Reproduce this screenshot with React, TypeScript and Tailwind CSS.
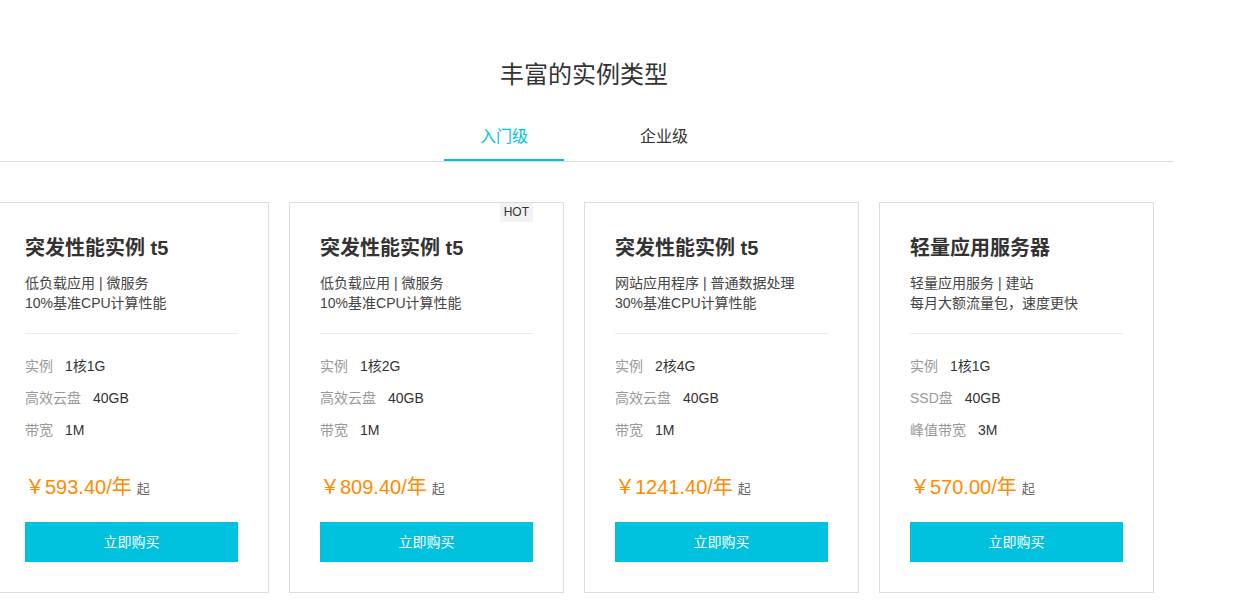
import React from 'react';

interface Plan {
  name: string;
  desc: string[];
  specs: [string, string][];
  price: string;
  hot?: boolean;
}

const plans: Plan[] = [
  {
    name: '突发性能实例 t5',
    desc: ['低负载应用 | 微服务', '10%基准CPU计算性能'],
    specs: [['实例', '1核1G'], ['高效云盘', '40GB'], ['带宽', '1M']],
    price: '593.40',
  },
  {
    name: '突发性能实例 t5',
    desc: ['低负载应用 | 微服务', '10%基准CPU计算性能'],
    specs: [['实例', '1核2G'], ['高效云盘', '40GB'], ['带宽', '1M']],
    price: '809.40',
    hot: true,
  },
  {
    name: '突发性能实例 t5',
    desc: ['网站应用程序 | 普通数据处理', '30%基准CPU计算性能'],
    specs: [['实例', '2核4G'], ['高效云盘', '40GB'], ['带宽', '1M']],
    price: '1241.40',
  },
  {
    name: '轻量应用服务器',
    desc: ['轻量应用服务 | 建站', '每月大额流量包，速度更快'],
    specs: [['实例', '1核1G'], ['SSD盘', '40GB'], ['峰值带宽', '3M']],
    price: '570.00',
  },
];

const PlanCard: React.FC<{ plan: Plan }> = ({ plan }) => (
  <div className="relative w-[275px] shrink-0 border border-[#dcdcdc] bg-white p-[30px]">
    {plan.hot && (
      <span className="absolute top-0 right-[30px] bg-[#f2f2f2] px-[4px] text-[12px] leading-[19px] text-[#333]">
        HOT
      </span>
    )}
    <h3 className="text-[20px] font-bold leading-[30px] text-[#333]">{plan.name}</h3>
    <div className="mt-[10px] text-[14px] leading-[20px] text-[#444]">
      {plan.desc.map((d, i) => (
        <p key={i}>{d}</p>
      ))}
    </div>
    <div className="mt-[20px] h-px bg-[#ebebeb]" />
    <ul className="mt-[16px]">
      {plan.specs.map(([label, value]) => (
        <li key={label} className="flex h-[32px] items-center text-[14px]">
          <span className="mr-[12px] text-[#999]">{label}</span>
          <span className="text-[#333]">{value}</span>
        </li>
      ))}
    </ul>
    <div className="mt-[26px] flex h-[30px] items-center">
      <span className="text-[20px] text-[#ff8a00]">￥{plan.price}/年</span>
      <span className="ml-[5px] mt-[4px] text-[13px] text-[#666]">起</span>
    </div>
    <button className="mt-[20px] h-[40px] w-full bg-[#00c1de] text-[14px] text-white">立即购买</button>
  </div>
);

export default function App() {
  return (
    <div
      className="min-h-screen overflow-hidden bg-white"
      style={{ fontFamily: '"Liberation Sans", Arial, "Noto Sans CJK SC", sans-serif' }}
    >
      <div className="ml-[-6px] w-[1180px] pt-[60px]">
        <h2 className="text-center text-[24px] leading-[30px] text-[#333]">丰富的实例类型</h2>
        <div className="mt-[25px] flex justify-center gap-[40px] border-b border-[#dddddd]">
          <div className="w-[120px] border-b-2 border-[#00c1de] pt-[10px] pb-[10px] text-center text-[16px] leading-[24px] text-[#00c1de]">
            入门级
          </div>
          <div className="w-[120px] border-b-2 border-transparent pt-[10px] pb-[10px] text-center text-[16px] leading-[24px] text-[#333]">
            企业级
          </div>
        </div>
        <div className="mt-[40px] flex gap-[20px]">
          {plans.map((p, i) => (
            <PlanCard key={i} plan={p} />
          ))}
        </div>
      </div>
    </div>
  );
}
